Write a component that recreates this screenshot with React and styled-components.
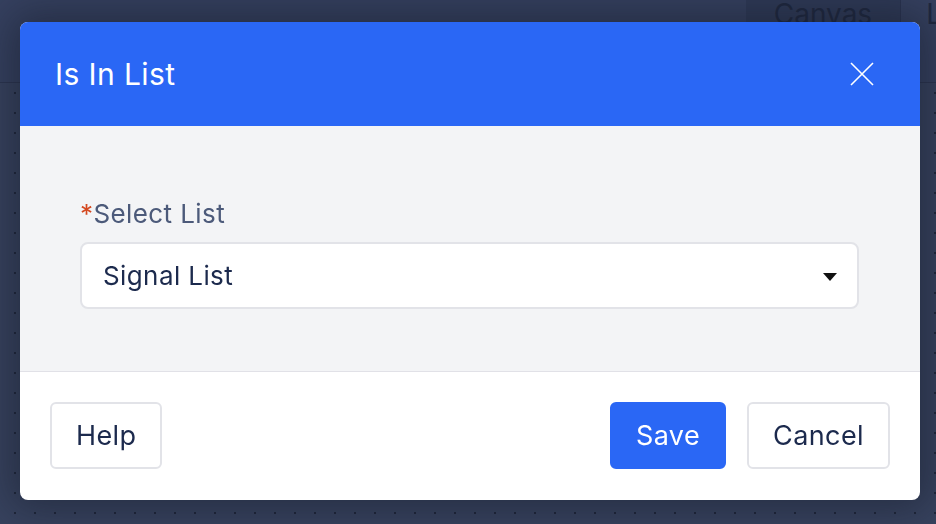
import React from "react";
import styled, { createGlobalStyle } from "styled-components";

const Global = createGlobalStyle`
  html, body { margin: 0; padding: 0; width: 100%; height: 100%; overflow: hidden; }
  body { font-family: Inter, "Noto Sans", sans-serif; background: #38435f; }
`;

const Page = styled.div`
  width: 936px;
  height: 524px;
  display: flex;
  flex-direction: column;
  background: #38435f;
  overflow: hidden;
`;

const TopBar = styled.div`
  height: 82px;
  flex: none;
  display: flex;
  justify-content: flex-end;
  align-items: flex-start;
  background: #364160;
  border-bottom: 1px solid #2c3550;
`;

const Tab = styled.div`
  height: 44px;
  padding: ${(p) => (p.$last ? "0 0 0 25px" : "0 28px")};
  display: flex;
  align-items: center;
  margin-top: -8px;
  font-size: 28px;
  color: #1f283f;
  background: ${(p) => (p.$active ? "#2f3a57" : "transparent")};
  border-right: ${(p) => (p.$active ? "1px solid #2a3350" : "none")};
  margin-right: ${(p) => (p.$last ? "-6px" : "0")};
`;

const Canvas = styled.div`
  flex: 1;
  background-color: #38435f;
  background-image: radial-gradient(circle, #1f263a 1.2px, transparent 1.4px);
  background-size: 20px 20px;
  background-position: 5px 0px;
`;

const Overlay = styled.div`
  position: fixed;
  inset: 0;
  display: flex;
  align-items: flex-start;
  padding: 22px 0 0 20px;
`;

const Dialog = styled.div`
  width: 900px;
  height: 478px;
  display: flex;
  flex-direction: column;
  border-radius: 8px;
  overflow: hidden;
  background: #fff;
  box-shadow: 0 0 40px 10px rgba(20, 25, 40, 0.5);
`;

const Header = styled.div`
  height: 104px;
  flex: none;
  background: #2a67f5;
  display: flex;
  align-items: center;
  justify-content: space-between;
  padding: 0 46px 0 35px;
`;

const Title = styled.h2`
  margin: 0;
  font-size: 30px;
  letter-spacing: 0.4px;
  font-weight: 400;
  color: #fff;
`;

const CloseButton = styled.button`
  border: 0;
  background: none;
  padding: 0;
  width: 24px;
  height: 24px;
  display: flex;
  cursor: pointer;
`;

const Body = styled.div`
  flex: 1;
  background: #f3f4f6;
  padding: 72px 61px 0 60px;
  border-bottom: 1px solid #e1e1e7;
`;

const Label = styled.div`
  font-size: 26px;
  letter-spacing: 0.4px;
  line-height: 32px;
  color: #4c5a7a;
  margin-bottom: 12px;
`;

const Required = styled.span`
  color: #d4481f;
`;

const Select = styled.div`
  height: 67px;
  box-sizing: border-box;
  border: 2px solid #e2e3e8;
  border-radius: 8px;
  background: #fff;
  display: flex;
  align-items: center;
  justify-content: space-between;
  padding: 0 20px 0 21px;
  font-size: 26px;
  letter-spacing: 0.4px;
  color: #1c2a4d;
`;

const Caret = styled.span`
  width: 0;
  height: 0;
  border-left: 7.5px solid transparent;
  border-right: 7.5px solid transparent;
  border-top: 8px solid #111;
  margin-top: 2px;
`;

const Footer = styled.div`
  height: 128px;
  flex: none;
  box-sizing: border-box;
  padding: 30px 30px 31px 30px;
  display: flex;
  align-items: stretch;
  gap: 21px;
`;

const Spacer = styled.div`
  flex: 1;
`;

const Button = styled.button`
  height: 67px;
  box-sizing: border-box;
  padding: 0 24px;
  border-radius: 6px;
  font-family: inherit;
  font-size: 27px;
  letter-spacing: 0.4px;
  cursor: pointer;
  border: 2px solid ${(p) => (p.$primary ? "#2a67f5" : "#e2e3e8")};
  background: ${(p) => (p.$primary ? "#2a67f5" : "#fff")};
  color: ${(p) => (p.$primary ? "#fff" : "#1c2a4d")};
`;

export default function App() {
  return (
    <>
      <Global />
      <Page>
        <TopBar>
          <Tab $active>Canvas</Tab>
          <Tab $last>L</Tab>
        </TopBar>
        <Canvas />
      </Page>
      <Overlay>
        <Dialog>
          <Header>
            <Title>Is In List</Title>
            <CloseButton aria-label="Close">
              <svg width="24" height="24" viewBox="0 0 24 24">
                <path d="M1 1L23 23M23 1L1 23" stroke="#fff" strokeWidth="1.6" />
              </svg>
            </CloseButton>
          </Header>
          <Body>
            <Label>
              <Required>*</Required>Select List
            </Label>
            <Select>
              Signal List
              <Caret />
            </Select>
          </Body>
          <Footer>
            <Button>Help</Button>
            <Spacer />
            <Button $primary>Save</Button>
            <Button>Cancel</Button>
          </Footer>
        </Dialog>
      </Overlay>
    </>
  );
}
